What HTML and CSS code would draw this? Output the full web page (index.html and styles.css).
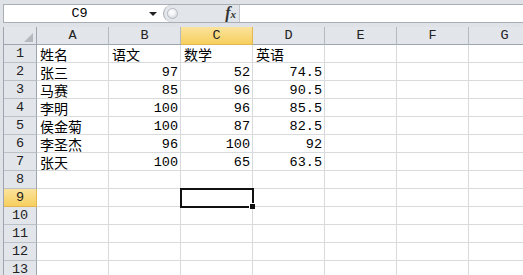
FILE: index.html
```html
<!DOCTYPE html>
<html lang="zh">
<head>
<meta charset="utf-8">
<title>Sheet</title>
<link rel="stylesheet" href="styles.css">
</head>
<body>
<div class="top">
  <div class="fbar">
    <div class="namebox"><span class="ref">C9</span><span class="arrow"></span></div>
    <div class="mid"><span class="knob"></span><span class="fx"><i>f</i><sub>x</sub></span></div>
    <div class="formula"></div>
  </div>
</div>
<div class="sheet">
  <div class="edge"></div>
  <div class="grid">
    <div class="corner"><svg width="9" height="9" viewBox="0 0 9 9"><polygon points="9,0 9,9 0,9" fill="#b4b9bf"/></svg></div>
    <div class="ch">A</div><div class="ch">B</div><div class="ch on">C</div><div class="ch">D</div><div class="ch">E</div><div class="ch">F</div><div class="ch">G</div>

    <div class="rh">1</div><div class="c">姓名</div><div class="c">语文</div><div class="c">数学</div><div class="c">英语</div><div class="c"></div><div class="c"></div><div class="c"></div>
    <div class="rh">2</div><div class="c">张三</div><div class="c n">97</div><div class="c n">52</div><div class="c n">74.5</div><div class="c"></div><div class="c"></div><div class="c"></div>
    <div class="rh">3</div><div class="c">马赛</div><div class="c n">85</div><div class="c n">96</div><div class="c n">90.5</div><div class="c"></div><div class="c"></div><div class="c"></div>
    <div class="rh">4</div><div class="c">李明</div><div class="c n">100</div><div class="c n">96</div><div class="c n">85.5</div><div class="c"></div><div class="c"></div><div class="c"></div>
    <div class="rh">5</div><div class="c">侯金菊</div><div class="c n">100</div><div class="c n">87</div><div class="c n">82.5</div><div class="c"></div><div class="c"></div><div class="c"></div>
    <div class="rh">6</div><div class="c">李圣杰</div><div class="c n">96</div><div class="c n">100</div><div class="c n">92</div><div class="c"></div><div class="c"></div><div class="c"></div>
    <div class="rh">7</div><div class="c">张天</div><div class="c n">100</div><div class="c n">65</div><div class="c n">63.5</div><div class="c"></div><div class="c"></div><div class="c"></div>
    <div class="rh">8</div><div class="c"></div><div class="c"></div><div class="c"></div><div class="c"></div><div class="c"></div><div class="c"></div><div class="c"></div>
    <div class="rh on">9</div><div class="c"></div><div class="c"></div><div class="c sel"></div><div class="c"></div><div class="c"></div><div class="c"></div><div class="c"></div>
    <div class="rh">10</div><div class="c"></div><div class="c"></div><div class="c"></div><div class="c"></div><div class="c"></div><div class="c"></div><div class="c"></div>
    <div class="rh">11</div><div class="c"></div><div class="c"></div><div class="c"></div><div class="c"></div><div class="c"></div><div class="c"></div><div class="c"></div>
    <div class="rh">12</div><div class="c"></div><div class="c"></div><div class="c"></div><div class="c"></div><div class="c"></div><div class="c"></div><div class="c"></div>
    <div class="rh">13</div><div class="c"></div><div class="c"></div><div class="c"></div><div class="c"></div><div class="c"></div><div class="c"></div><div class="c"></div>
  </div>
</div>
</body>
</html>
```
FILE: styles.css
```css
html, body {
  margin: 0;
  height: 100%;
  overflow: hidden;
  background: #fff;
}
body {
  font-family: "Liberation Mono", monospace;
  color: #000;
}
.top {
  background: #dfe3e8;
  padding: 4px 0 4px 3px;
}
.fbar {
  display: flex;
  height: 17px;
  border-top: 1px solid #a9aeb5;
  border-bottom: 1px solid #a9aeb5;
  border-left: 1px solid #a9aeb5;
  background: #fff;
}
.namebox {
  width: 159px;
  flex-shrink: 0;
  display: flex;
  align-items: center;
}
.ref {
  flex: 1;
  text-align: center;
  font-size: 13.5px;
  line-height: 17px;
  padding-left: 6px;
}
.arrow {
  width: 0;
  height: 0;
  border-left: 4px solid transparent;
  border-right: 4px solid transparent;
  border-top: 4px solid #222;
  margin-right: 6px;
  margin-top: 1px;
}
.mid {
  width: 77px;
  flex-shrink: 0;
  box-sizing: border-box;
  display: flex;
  align-items: center;
  background: #e2e5e9;
  border-left: 1px solid #a9aeb5;
  border-right: 1px solid #c3c7cc;
  border-radius: 9px 0 0 9px;
}
.knob {
  width: 11px;
  height: 11px;
  box-sizing: border-box;
  border-radius: 50%;
  border: 1px solid #b6bac0;
  background: radial-gradient(circle at 40% 35%, #ffffff 0, #f1f2f4 40%, #c9cdd2 100%);
  margin-left: 3px;
}
.fx {
  margin-left: auto;
  margin-right: 3px;
  font-family: "Liberation Serif", serif;
  font-weight: bold;
  font-size: 16px;
  line-height: 15px;
  color: #333;
}
.fx sub {
  font-style: italic;
  font-size: 11px;
  vertical-align: 0;
}
.formula {
  flex: 1;
  background: #fff;
}
.sheet {
  display: flex;
}
.edge {
  width: 3px;
  flex-shrink: 0;
  background: #dfe3e8;
  border-right: 1px solid #9ea5ae;
}
.grid {
  flex-shrink: 0;
  display: grid;
  grid-template-columns: 33px repeat(7, 72px);
  grid-auto-rows: 18px;
}
.grid > div {
  box-sizing: border-box;
}
.corner {
  background: #e2e5ea;
  border-right: 1px solid #9ea5ae;
  border-bottom: 1px solid #9ea5ae;
  display: flex;
  justify-content: flex-end;
  align-items: flex-end;
  padding: 0 3px 2px 0;
}
.corner svg {
  display: block;
}
.ch {
  background: #e2e5ea;
  border-right: 1px solid #b3b9c0;
  border-bottom: 1px solid #9ea5ae;
  text-align: center;
  font-size: 13.5px;
  line-height: 18px;
  color: #222;
}
.rh {
  background: #e2e5ea;
  border-right: 1px solid #9ea5ae;
  border-bottom: 1px solid #bcc1c8;
  text-align: center;
  font-size: 13.5px;
  line-height: 18px;
  color: #222;
}
.ch.on, .rh.on {
  background: linear-gradient(#fbe39c, #f7cf5f);
  border-color: #e2b651;
}
.c {
  border-right: 1px solid #d9dadb;
  border-bottom: 1px solid #d9dadb;
  padding: 1px 3px 0;
  font-family: "Noto Sans CJK SC", sans-serif;
  font-size: 14px;
  line-height: 16px;
  white-space: nowrap;
}
.c.n {
  text-align: right;
  font-family: "Liberation Mono", monospace;
  font-size: 13.5px;
  line-height: 17px;
  padding-right: 2px;
}
.sel {
  position: relative;
  outline: 2px solid #111;
  outline-offset: -1px;
  z-index: 1;
}
.sel::after {
  content: "";
  position: absolute;
  right: -3px;
  bottom: -3px;
  width: 5px;
  height: 5px;
  background: #111;
  box-shadow: -1px -1px 0 #fff;
}
```
